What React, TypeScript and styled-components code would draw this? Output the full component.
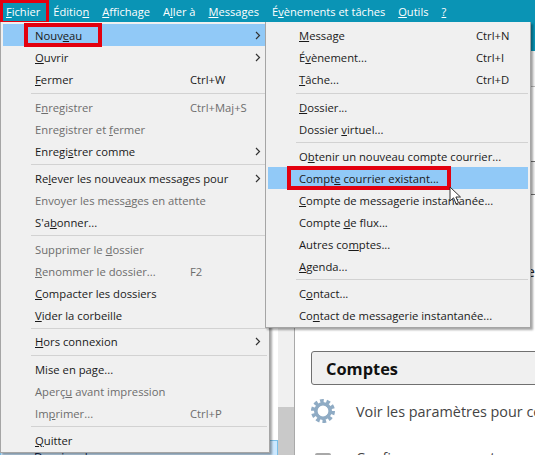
import { Fragment } from "react";
import styled, { createGlobalStyle } from "styled-components";

type TEntry = {
  label?: string; // & marks the mnemonic
  shortcut?: string;
  disabled?: boolean;
  sub?: boolean;
  active?: boolean;
  callout?: { left: number; width: number };
  sep?: number; // separator height
};

const fileMenu: TEntry[] = [
  { label: "Nouv&eau", sub: true, active: true, callout: { left: 21, width: 78 } },
  { label: "&Ouvrir", sub: true },
  { label: "&Fermer", shortcut: "Ctrl+W" },
  { sep: 6 },
  { label: "E&nregistrer", shortcut: "Ctrl+Maj+S", disabled: true },
  { label: "Enregistrer et &fermer", disabled: true },
  { label: "Enregi&strer comme", sub: true },
  { sep: 5 },
  { label: "Re&lever les nouveaux messages pour", sub: true },
  { label: "Envoyer les mess&ages en attente", disabled: true },
  { label: "S'a&bonner..." },
  { sep: 5 },
  { label: "Supprimer le &dossier", disabled: true },
  { label: "&Renommer le dossier...", shortcut: "F2", disabled: true },
  { label: "&Compacter les dossiers" },
  { label: "&Vider la corbeille" },
  { sep: 4 },
  { label: "&Hors connexion", sub: true },
  { sep: 6 },
  { label: "Mise en pa&ge..." },
  { label: "Aperç&u avant impression", disabled: true },
  { label: "Im&primer...", shortcut: "Ctrl+P", disabled: true },
  { sep: 5 },
  { label: "&Quitter" },
];

const newMenu: TEntry[] = [
  { label: "&Message", shortcut: "Ctrl+N" },
  { label: "É&vènement...", shortcut: "Ctrl+I" },
  { label: "&Tâche...", shortcut: "Ctrl+D" },
  { sep: 6 },
  { label: "&Dossier..." },
  { label: "Dossier &virtuel..." },
  { sep: 5 },
  { label: "O&btenir un nouveau compte courrier..." },
  { label: "Compt&e courrier existant...", active: true, callout: { left: 19, width: 164 } },
  { label: "&Compte de messagerie instantanée..." },
  { label: "Compte &de flux..." },
  { label: "Autres co&mptes..." },
  { label: "&Agenda..." },
  { sep: 5 },
  { label: "C&ontact..." },
  { label: "Co&ntact de messagerie instantanée..." },
];

const menuBarItems = [
  "&Fichier",
  "Éditio&n",
  "&Affichage",
  "A&ller à",
  "&Messages",
  "É&vènements et tâches",
  "&Outils",
  "&?",
];

const GlobalStyle = createGlobalStyle`
  html, body {
    margin: 0;
    padding: 0;
    background: #ffffff;
  }
`;

const Page = styled.div`
  position: relative;
  width: 535px;
  height: 455px;
  overflow: hidden;
  display: flex;
  flex-direction: column;
  font-family: "Open Sans", "Noto Sans", sans-serif;
  color: #1a1a1a;
`;

const MenuBar = styled.div`
  flex: 0 0 22px;
  display: flex;
  align-items: center;
  gap: 13px;
  padding-left: 6px;
  background: #0a94b5;
  font-size: 11.1px;
  color: #ffffff;
`;

const BarItem = styled.span`
  position: relative;
  white-space: nowrap;
`;

const BarCallout = styled.span`
  position: absolute;
  left: -6px;
  top: -4px;
  width: 49px;
  height: 23px;
  box-sizing: border-box;
  border: 3px solid #e3000f;
  border-bottom-width: 2px;
`;

const Desk = styled.div`
  flex: 1;
  min-height: 0;
  display: flex;
`;

const Sidebar = styled.div`
  width: 278px;
  padding-top: 418px;
  box-sizing: border-box;
  overflow: hidden;
`;

const FolderRow = styled.div`
  height: 27px;
  padding-left: 33px;
  display: flex;
  align-items: flex-end;
  box-sizing: border-box;
  background: #cce8ff;
  border: 1px solid #7bbfe8;
  font-size: 12px;
  color: #1c2f55;
`;

const Scrollbar = styled.div`
  width: 16px;
  display: flex;
  flex-direction: column;
  justify-content: flex-end;
  background: #f0f0f0;
  border-right: 1px solid #a9a9a9;
`;

const ScrollThumb = styled.div`
  height: 48px;
  background: #c9c9c9;
`;

const Main = styled.div`
  flex: 1;
  min-width: 0;
  display: flex;
  flex-direction: column;
  overflow: hidden;
`;

const TitleBand = styled.div`
  flex: 0 0 29px;
  background: #0a94b5;
`;

const ToolBand = styled.div`
  flex: 0 0 35px;
  background: #f5f5f5;
  border-bottom: 1px solid #b9b9b9;
`;

const Section = styled.div`
  flex: 0 0 auto;
  display: flex;
  flex-direction: column;
  padding-left: 16px;
`;

const SideBox = styled.div`
  margin-top: 74px;
  width: 260px;
  height: 34px;
  box-sizing: border-box;
  border: 1px solid #707070;
  border-radius: 3px;
  background: #f0f0f0;
`;

const StrayLine = styled.div`
  margin-top: 66px;
  height: 20px;
  text-align: right;
  font-size: 15px;
  line-height: 20px;
  color: #222222;
`;

const SectionTitle = styled.div`
  margin-top: 70px;
  width: 260px;
  height: 34px;
  box-sizing: border-box;
  padding-left: 14px;
  display: flex;
  align-items: center;
  border: 1px solid #707070;
  border-radius: 3px;
  background: #f0f0f0;
  font-size: 16.4px;
  font-weight: 700;
  color: #111111;
  white-space: nowrap;
`;

const ActionRow = styled.div`
  display: flex;
  align-items: center;
  gap: 21px;
  height: 24px;
  margin-top: 14px;
  font-size: 14.4px;
  color: #444444;
  white-space: nowrap;
`;

const LowerRow = styled(ActionRow)`
  margin-top: 22px;
`;

const GreyIcon = styled.div`
  flex: 0 0 16px;
  margin-left: 4px;
  margin-right: 4px;
  margin-top: 16px;
  height: 24px;
  border-radius: 2px;
  background: #a8a8a8;
`;

const MenuPanel = styled.div<{ $left: number; $width: number }>`
  position: absolute;
  top: 22px;
  left: ${(p) => p.$left}px;
  width: ${(p) => p.$width}px;
  box-sizing: border-box;
  padding: 2px 2px 1px 2px;
  background: #f0f0f0;
  border: 1px solid #a5a5a5;
  border-top: none;
  box-shadow: 2px 2px 2px rgba(0, 0, 0, 0.35);
  font-size: 11.25px;
`;

const Row = styled.div<{ $active?: boolean; $disabled?: boolean; $textX: number; $keyX: number }>`
  position: relative;
  height: 22px;
  display: grid;
  grid-template-columns: ${(p) => p.$keyX}px 1fr 12px;
  align-items: center;
  padding-left: ${(p) => p.$textX}px;
  background: ${(p) => (p.$active ? "#91c9f7" : "transparent")};
  color: ${(p) => (p.$disabled ? "#6d6d6d" : "#1a1a1a")};
  white-space: nowrap;
`;

const RowCallout = styled.span<{ $left: number; $width: number }>`
  position: absolute;
  top: -1px;
  left: ${(p) => p.$left}px;
  width: ${(p) => p.$width}px;
  height: 24px;
  box-sizing: border-box;
  border: 4px solid #e3000f;
`;

const Divider = styled.div<{ $height: number; $indent: number }>`
  height: ${(p) => p.$height}px;
  display: flex;
  align-items: center;
  padding-left: ${(p) => p.$indent}px;

  &::after {
    content: "";
    flex: 1;
    height: 1px;
    background: #d2d2d2;
  }
`;

const Pointer = styled.svg`
  position: absolute;
  left: 449px;
  top: 186px;
`;

function Mnemonic({ text }: { text: string }) {
  const at = text.indexOf("&");
  if (at < 0) return <>{text}</>;
  return (
    <>
      {text.slice(0, at)}
      <u>{text[at + 1]}</u>
      {text.slice(at + 2)}
    </>
  );
}

function Chevron() {
  return (
    <svg width="6" height="9" viewBox="0 0 6 9">
      <path d="M1 1l3.5 3.5L1 8" fill="none" stroke="#333333" strokeWidth="1.2" />
    </svg>
  );
}

function Gear() {
  return (
    <svg width="24" height="24" viewBox="0 0 24 24" style={{ flex: "0 0 24px" }}>
      <circle cx="12" cy="12" r="10" fill="none" stroke="#8fabc4" strokeWidth="4" strokeDasharray="3.6 2.68" />
      <circle cx="12" cy="12" r="7.2" fill="none" stroke="#8fabc4" strokeWidth="3.6" />
      <circle cx="12" cy="12" r="5" fill="#ffffff" />
    </svg>
  );
}

function Menu({
  entries,
  left,
  width,
  textX,
  keyX,
  indent,
}: {
  entries: TEntry[];
  left: number;
  width: number;
  textX: number;
  keyX: number;
  indent: number;
}) {
  return (
    <MenuPanel $left={left} $width={width}>
      {entries.map((entry, i) =>
        entry.sep ? (
          <Divider key={i} $height={entry.sep} $indent={indent} />
        ) : (
          <Row key={i} $active={entry.active} $disabled={entry.disabled} $textX={textX} $keyX={keyX}>
            <span>
              <Mnemonic text={entry.label ?? ""} />
            </span>
            <span>{entry.shortcut}</span>
            {entry.sub ? <Chevron /> : <span />}
            {entry.callout && <RowCallout $left={entry.callout.left} $width={entry.callout.width} />}
          </Row>
        )
      )}
    </MenuPanel>
  );
}

export default function App() {
  return (
    <Fragment>
      <GlobalStyle />
      <Page>
        <MenuBar>
          {menuBarItems.map((item, i) => (
            <BarItem key={item}>
              <Mnemonic text={item} />
              {i === 0 && <BarCallout />}
            </BarItem>
          ))}
        </MenuBar>
        <Desk>
          <Sidebar>
            <FolderRow>Dossiers locaux</FolderRow>
          </Sidebar>
          <Scrollbar>
            <ScrollThumb />
          </Scrollbar>
          <Main>
            <TitleBand />
            <ToolBand />
            <Section>
              <SideBox />
              <StrayLine>e</StrayLine>
              <SectionTitle>Comptes</SectionTitle>
              <ActionRow>
                <Gear />
                Voir les paramètres pour ce compte
              </ActionRow>
              <LowerRow>
                <GreyIcon />
                Configurer un compte :
              </LowerRow>
            </Section>
          </Main>
        </Desk>
        <Menu entries={fileMenu} left={0} width={270} textX={32} keyX={155} indent={28} />
        <Menu entries={newMenu} left={265} width={266} textX={31} keyX={177} indent={28} />
        <Pointer width="13" height="19" viewBox="0 0 13 19">
          <path d="M1 1v14l3.5-3.2 2.6 6 2.4-1-2.6-5.8H11.500z" fill="#ffffff" stroke="#333333" strokeWidth="1" />
        </Pointer>
      </Page>
    </Fragment>
  );
}
